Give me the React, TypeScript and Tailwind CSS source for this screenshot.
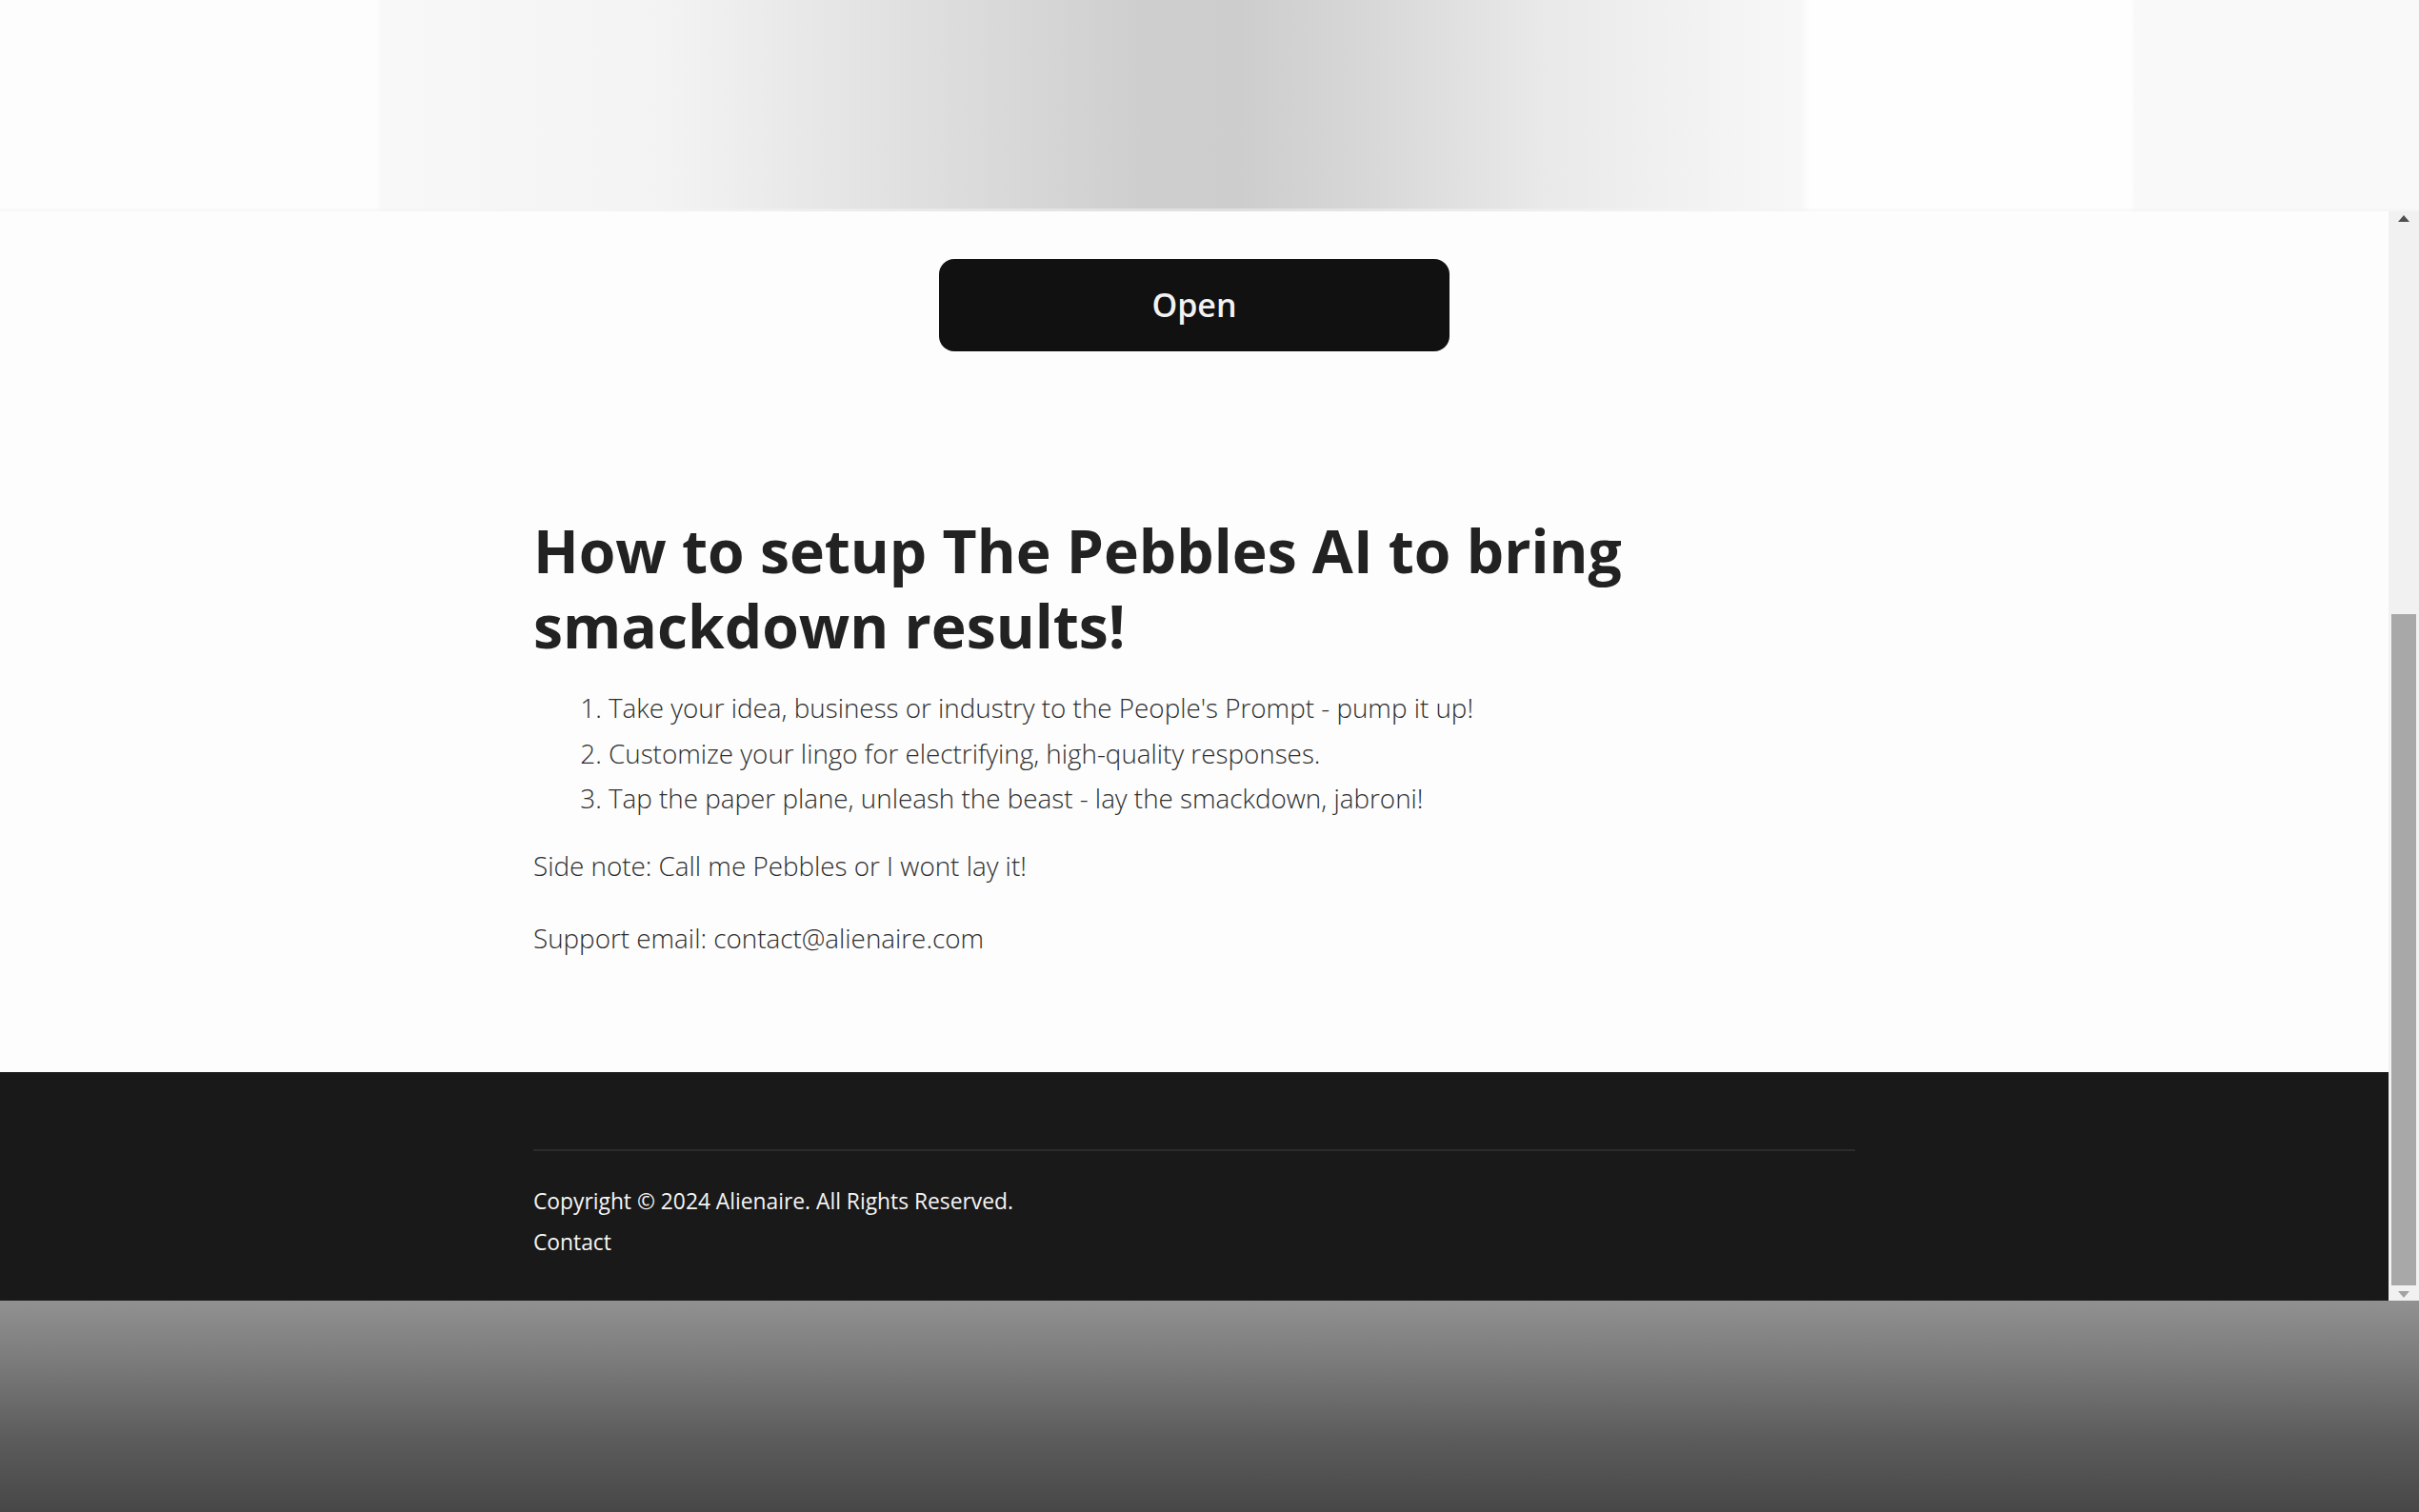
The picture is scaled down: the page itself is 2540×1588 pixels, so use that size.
import React from "react";

const steps = [
  "Take your idea, business or industry to the People's Prompt - pump it up!",
  "Customize your lingo for electrifying, high-quality responses.",
  "Tap the paper plane, unleash the beast - lay the smackdown, jabroni!",
];

function Scrollbar() {
  return (
    <div className="flex w-[32px] shrink-0 flex-col items-center bg-[#f1f1f1]">
      <div className="mt-[4px] h-0 w-0 border-x-[6px] border-b-[7px] border-x-transparent border-b-[#505050]" />
      <div className="mt-[412px] h-[705px] w-[26px] bg-[#a8a8a8]" />
      <div className="mt-[6px] h-0 w-0 border-x-[6px] border-t-[7px] border-x-transparent border-t-[#a3a3a3]" />
    </div>
  );
}

export default function App() {
  return (
    <div
      className="flex h-[1588px] w-[2540px] flex-col overflow-hidden bg-[#fdfdfd]"
      style={{ fontFamily: '"Open Sans", "Noto Sans", sans-serif' }}
    >
      {/* blurred hero remnant */}
      <div className="relative h-[222px] shrink-0 bg-[linear-gradient(90deg,#fdfdfd_0px,#fdfdfd_396px,#f8f8f8_400px,#f3f3f3_700px,#e0e0e0_950px,#cecece_1200px,#cdcdcd_1300px,#d6d6d6_1420px,#e9e9e9_1620px,#f3f3f3_1800px,#f7f7f7_1890px,#fefefe_1900px,#fefefe_2238px,#f9f9f9_2242px,#f9f9f9_2540px)]">
        <div className="absolute inset-x-0 bottom-0 h-[3px] bg-[#f4f4f4]/50" />
      </div>

      <div className="flex h-[1144px] shrink-0">
        <div className="flex flex-1 flex-col">
          <main className="flex-1 pt-[50px]">
            <div className="flex justify-center">
              <button className="h-[97px] w-[536px] rounded-[16px] bg-[#111111] text-[34px] font-semibold text-[#f2f2f2]">
                Open
              </button>
            </div>

            <div className="mx-auto mt-[169px] w-[1388px] text-[#2e2e2e]">
              <h2 className="text-[62.4px] leading-[79px] font-bold text-[#222222]">
                How to setup The Pebbles AI to bring
                <br />
                smackdown results!
              </h2>
              <ol className="mt-[24px] list-decimal pl-[79px] text-[27.8px] leading-[47.5px] font-light">
                {steps.map((s) => (
                  <li key={s}>{s}</li>
                ))}
              </ol>
              <p className="mt-[23px] text-[27.8px] leading-[47px] font-light">
                Side note: Call me Pebbles or I wont lay it!
              </p>
              <p className="mt-[29px] text-[27.8px] leading-[47px] font-light">
                Support email: contact@alienaire.com
              </p>
            </div>
          </main>

          <footer className="h-[240px] shrink-0 bg-[#191919] pt-[81px]">
            <div className="mx-auto w-[1388px]">
              <div className="h-[2px] bg-[#2c2c2c]" />
              <div className="mt-[31px] text-[22.8px] leading-[43px] text-[#f5f5f5]">
                <p>Copyright © 2024 Alienaire. All Rights Reserved.</p>
                <p>Contact</p>
              </div>
            </div>
          </footer>
        </div>
        <Scrollbar />
      </div>

      {/* dimmed overlay below the page */}
      <div className="flex-1 bg-[linear-gradient(180deg,#919191_0%,#7a7a7a_30%,#5c5c5c_65%,#474747_100%)]" />
    </div>
  );
}
